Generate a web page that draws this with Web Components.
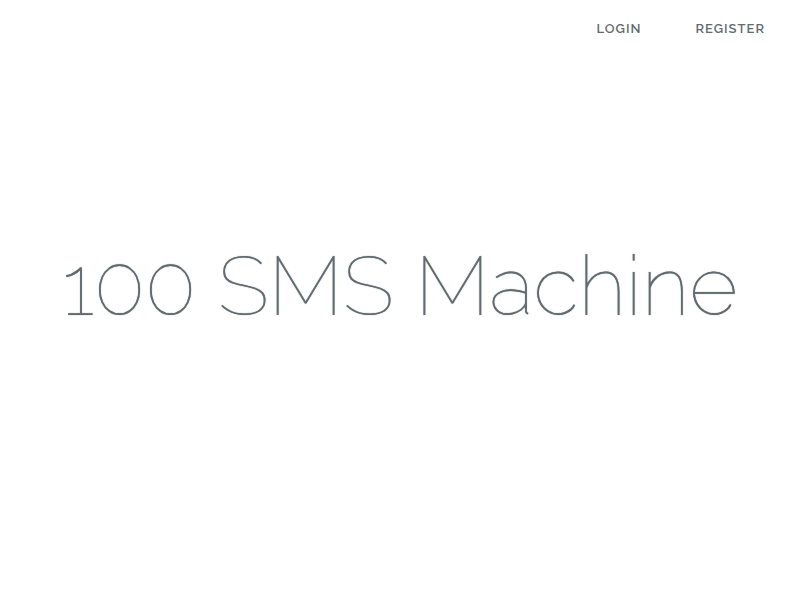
<!DOCTYPE html>
<html lang="en">
<head>
<meta charset="utf-8">
<title>100 SMS Machine</title>
<style>
html, body { height: 100%; margin: 0; background: #fff; }
body { color: #636b6f; font-family: Raleway, Lato, sans-serif; font-weight: 100; }
</style>
</head>
<body>
<welcome-page>
  <nav-links slot="nav">
    <nav-link to="#login">Login</nav-link>
    <nav-link to="#register">Register</nav-link>
  </nav-links>
  <page-title>100 SMS Machine</page-title>
</welcome-page>
<script>
class WelcomePage extends HTMLElement {
  constructor() {
    super();
    this.attachShadow({ mode: 'open' }).innerHTML = `
      <style>
        :host { display: grid; grid-template-rows: 1fr auto 1fr; min-height: 100vh; }
        header { display: flex; justify-content: flex-end; align-items: flex-start; padding: 19px 10px 0; }
        main { text-align: center; }
      </style>
      <header><slot name="nav"></slot></header>
      <main><slot></slot></main>`;
  }
}
class NavLinks extends HTMLElement {
  constructor() {
    super();
    this.attachShadow({ mode: 'open' }).innerHTML = `
      <style>:host { display: block; } nav { display: flex; gap: 4px; }</style>
      <nav><slot></slot></nav>`;
  }
}
class NavLink extends HTMLElement {
  constructor() {
    super();
    this.attachShadow({ mode: 'open' }).innerHTML = `
      <style>
        :host { display: block; }
        a { display: block; padding: 0 25px; color: inherit; font-size: 13px; font-weight: 600;
            line-height: 20px; letter-spacing: 1px; text-decoration: none; text-transform: uppercase; }
      </style>
      <a><slot></slot></a>`;
  }
  connectedCallback() {
    this.shadowRoot.querySelector('a').href = this.getAttribute('to');
  }
}
class PageTitle extends HTMLElement {
  constructor() {
    super();
    this.attachShadow({ mode: 'open' }).innerHTML = `
      <style>
        :host { display: block; }
        h1 { margin: 0 0 28px; font-size: 84px; font-weight: 100; line-height: 100px; white-space: nowrap;
             text-shadow: 0 0 1px currentColor; }
      </style>
      <h1><slot></slot></h1>`;
  }
}
customElements.define('welcome-page', WelcomePage);
customElements.define('nav-links', NavLinks);
customElements.define('nav-link', NavLink);
customElements.define('page-title', PageTitle);
</script>
</body>
</html>
